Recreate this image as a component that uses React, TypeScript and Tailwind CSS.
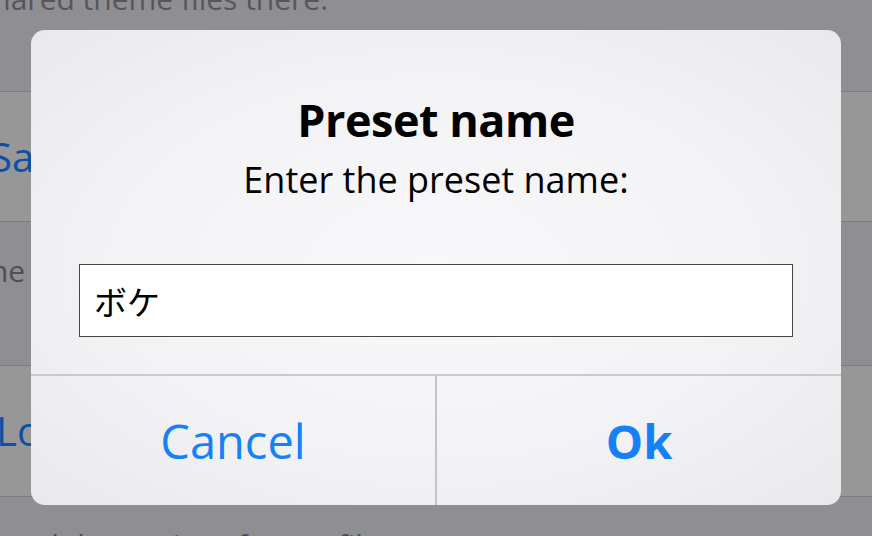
import React from 'react';

const font = { fontFamily: '"Open Sans", "Noto Sans", "Noto Sans CJK JP", sans-serif' };

const PresetDialog = () => {
  return (
    <div className="absolute left-[31px] top-[30px] w-[810px] h-[475px] rounded-[14px] overflow-hidden flex flex-col bg-[radial-gradient(ellipse_at_center,#f8f8fa_0%,#f3f3f5_55%,#e9e9ec_100%)]">
      <div className="flex flex-col items-center pt-[66px]">
        <h2 className="text-[45px] leading-[48px] font-bold text-black tracking-[-0.5px]">Preset name</h2>
        <p className="text-[36px] leading-[44px] text-black mt-[14px]">Enter the preset name:</p>
      </div>
      <div className="px-[48px] mt-[62px]">
        <div className="h-[73px] bg-white border border-[#454545] flex items-center px-[14px]">
          <span className="text-[33px] text-black pt-[2px]" style={{ fontFamily: '"Noto Sans CJK JP", sans-serif' }}>ボケ</span>
        </div>
      </div>
      <div className="mt-auto h-[131px] border-t-2 border-[#c9c9ce] flex">
        <button className="w-[406px] border-r-2 border-[#c4c4c8] text-[47px] text-[#1581f6] pt-[2px]">Cancel</button>
        <button className="flex-1 text-[47px] font-bold text-[#1581f6] pt-[2px]">Ok</button>
      </div>
    </div>
  );
};

const App = () => {
  return (
    <div className="relative w-[872px] h-[536px] overflow-hidden bg-[#8f8e93]" style={font}>
      {/* dimmed settings page behind the alert */}
      <div className="h-[92px] border-b border-[#7c7c80] flex flex-col">
        <p className="text-[30px] leading-none text-[#57575b] -mt-[16px] -ml-[22px] whitespace-nowrap">shared theme files there.</p>
      </div>
      <div className="h-[130px] bg-[#979797] border-b border-[#7c7c80] flex items-center">
        <span className="text-[40px] text-[#0d4fa6] -ml-[10px]">Save</span>
      </div>
      <div className="h-[144px] border-b border-[#7c7c80] flex flex-col pt-[30px]">
        <div className="w-[25px] flex justify-end">
          <span className="text-[30px] leading-[38px] text-[#4f4f53] whitespace-nowrap">Save the current settings as a theme</span>
        </div>
      </div>
      <div className="h-[131px] bg-[#979797] border-b border-[#7c7c80] flex items-center">
        <span className="text-[40px] text-[#0d4fa6] -ml-[4px]">Load</span>
      </div>
      <div className="flex flex-col pt-[33px]">
        <p className="text-[30px] leading-none text-[#4f4f53] -ml-[10px] whitespace-nowrap">Load the settings from a file.</p>
      </div>
      <PresetDialog />
    </div>
  );
};

export default App;
